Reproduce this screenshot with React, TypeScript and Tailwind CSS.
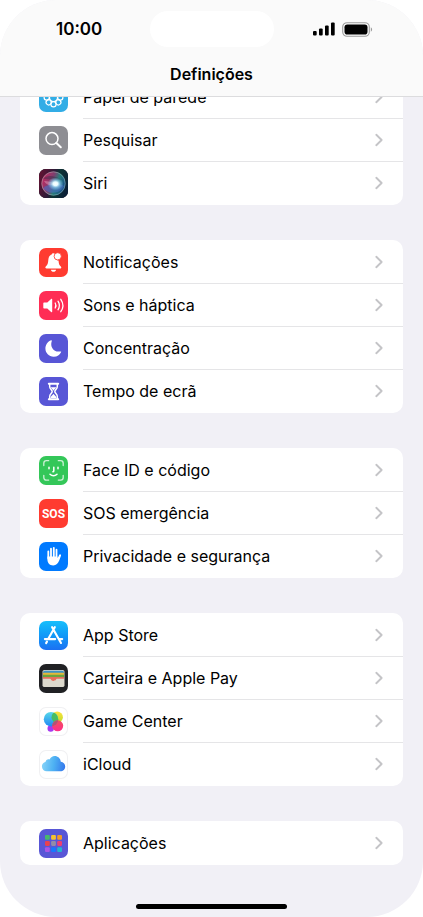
import React from 'react';

interface SettingsItem {
    label: string;
    tile: string;
    icon: React.ReactNode;
}

const WallpaperIcon = () => (
    <svg viewBox="0 0 29 29" className="size-full" fill="none" stroke="#fff" strokeWidth="1.2" aria-hidden="true">
        {[0, 45, 90, 135, 180, 225, 270, 315].map(angle => (
            <circle key={angle} cx="14.5" cy="7.7" r="2.6" transform={`rotate(${angle} 14.5 14.5)`} />
        ))}
        <circle cx="14.5" cy="14.5" r="4" />
    </svg>
);

const SearchIcon = () => (
    <svg viewBox="0 0 29 29" className="size-full" fill="none" stroke="#fff" strokeLinecap="round" aria-hidden="true">
        <circle cx="13" cy="12.6" r="6" strokeWidth="1.5" />
        <path d="M17.4 17l4.4 4.3" strokeWidth="2" />
    </svg>
);

const SiriIcon = () => (
    <svg viewBox="0 0 29 29" className="size-full" aria-hidden="true">
        <defs>
            <linearGradient id="siriBase" x1="0" y1="0.3" x2="1" y2="0.6">
                <stop offset="0" stopColor="#8d1740" />
                <stop offset="0.45" stopColor="#3b2348" />
                <stop offset="0.6" stopColor="#0e4a43" />
                <stop offset="1" stopColor="#0a2b49" />
            </linearGradient>
            <linearGradient id="siriOrb" x1="0" y1="0.3" x2="1" y2="0.7">
                <stop offset="0" stopColor="#d92866" />
                <stop offset="0.4" stopColor="#8b4778" />
                <stop offset="0.62" stopColor="#2c8a86" />
                <stop offset="1" stopColor="#1a4f9c" />
            </linearGradient>
            <radialGradient id="siriGlow">
                <stop offset="0" stopColor="#fff" />
                <stop offset="0.3" stopColor="#e6fbff" />
                <stop offset="0.6" stopColor="#8fcdf0" stopOpacity="0.65" />
                <stop offset="1" stopColor="#8fcdf0" stopOpacity="0" />
            </radialGradient>
        </defs>
        <rect width="29" height="29" fill="#0c0c18" />
        <rect width="29" height="29" fill="url(#siriBase)" opacity="0.65" />
        <circle cx="14.5" cy="14.5" r="12" fill="url(#siriOrb)" opacity="0.85" />
        <path d="M4 10C8 5 16 7 23 11C17 11 10 10 4 10Z" fill="#17283d" opacity="0.35" />
        <path d="M4 19C9 15 18 13 25 17C22 25 9 26 4 19Z" fill="#4a6fc4" opacity="0.6" />
        <path d="M5 12C9 12 13 13 16 14.500C13 17 8 17 5 12Z" fill="#f2a3c4" opacity="0.45" />
        <circle cx="14.5" cy="14.5" r="11.7" fill="none" stroke="#a7ccc4" strokeWidth="0.7" opacity="0.65" />
        <ellipse cx="16.500" cy="14.800" rx="8" ry="6.500" fill="url(#siriGlow)" />
    </svg>
);

const BellIcon = () => (
    <svg viewBox="0 0 29 29" className="size-full" fill="#fff" aria-hidden="true">
        <path d="M14.500 5.200c.6 0 1.100.2 1.500.7a4.200 4.200 0 0 0 3.500 6.500c.3 3.700.9 4.700 2.300 6.200.9 1 .5 1.900-.6 1.900H7.500c-1.200 0-1.600-1-.7-1.900 1.700-1.800 2.300-3 2.500-6.500.2-3.300 1.400-5 3.400-5.600.2-.8.9-1.300 1.800-1.300z" />
        <circle cx="18.700" cy="8.300" r="3.600" stroke="#ff3b30" strokeWidth="0.800" />
        <path d="M11.900 21.700h5.200c-.3 1.300-1.300 2.100-2.600 2.100s-2.300-.8-2.600-2.100z" />
    </svg>
);

const SpeakerIcon = () => (
    <svg viewBox="0 0 29 29" className="size-full" fill="none" stroke="#fff" strokeLinecap="round" aria-hidden="true">
        <path d="M5.300 11.600h3l3.800-3.600c.6-.5 1.100-.3 1.100.4v12.200c0 .7-.5.9-1.100.4l-3.800-3.600h-3c-.6 0-1-.4-1-1v-3.800c0-.6.4-1 1-1z" fill="#fff" stroke="none" />
        <path d="M16.200 12c.9 1.500.9 3.500 0 5M19 10.200c1.700 2.600 1.700 6 0 8.600M21.800 8.300c2.600 3.800 2.600 8.600 0 12.400" strokeWidth="1.300" />
    </svg>
);

const MoonIcon = () => (
    <svg viewBox="0 0 29 29" className="size-full" fill="#fff" aria-hidden="true">
        <path d="M12.100 6.300c.5-.2.9.2.7.7-2.200 6.100 2.200 11.800 8.800 10.400.5-.1.8.3.6.7a8.300 8.300 0 0 1-7.600 4.700c-4.600 0-8.200-3.600-8.200-8.200 0-3.700 2.200-6.900 5.700-8.300z" />
    </svg>
);

const HourglassIcon = () => (
    <svg viewBox="0 0 29 29" className="size-full" aria-hidden="true">
        <path d="M10.700 7v2.800c0 2.100 2.500 3.100 2.500 4.700s-2.500 2.600-2.500 4.700V22M18.300 7v2.800c0 2.100-2.500 3.100-2.500 4.700s2.500 2.600 2.500 4.700V22" fill="none" stroke="#fff" strokeWidth="1.500" />
        <path d="M9.800 6.700h9.400M9.800 22.300h9.400" stroke="#fff" strokeWidth="2" strokeLinecap="round" />
        <path d="M11.700 10.200h5.600c-.4 1.200-2.300 2.100-2.800 3.500-.5-1.400-2.400-2.300-2.800-3.500zM14.500 16.800c.7 1.600 3 2.200 3 4.100h-6c0-1.900 2.300-2.500 3-4.100z" fill="#fff" />
    </svg>
);

const FaceIdIcon = () => (
    <svg viewBox="0 0 29 29" className="size-full" fill="none" stroke="#fff" strokeLinecap="round" strokeLinejoin="round" aria-hidden="true">
        <path d="M4.800 9.500V7.300c0-1.700.9-2.600 2.600-2.600h2.300M19.300 4.700h2.300c1.700 0 2.600.9 2.600 2.600v2.200M24.200 19.300v2.200c0 1.700-.9 2.600-2.600 2.600h-2.300M9.700 24.100H7.400c-1.700 0-2.600-.9-2.600-2.600v-2.200" strokeWidth="1.300" opacity="0.75" />
        <path d="M10 11.200v1.600M19 11.200v1.600M14.800 11.200v3.700c0 .6-.3.9-.9.9" strokeWidth="1.500" />
        <path d="M11 18.200c2 1.900 5 1.900 7 0" strokeWidth="1.500" />
    </svg>
);

const HandIcon = () => (
    <svg viewBox="0 0 29 29" className="size-full" fill="none" stroke="#fff" strokeLinecap="round" aria-hidden="true">
        <path d="M9.300 9.500v7M12 6.700v9M14.800 5.800v9M17.500 7.700v9" strokeWidth="1.800" />
        <path d="M8.400 14.500h10v1.800c.7-.7 1-1.700 1.400-2.600.4-1 1-1.500 1.700-1.300.6.200.7.8.4 1.600l-1.700 4.600c-1.200 3.200-2.900 4.800-6 4.800-3.700 0-5.800-2.300-5.800-6.100z" fill="#fff" stroke="none" />
    </svg>
);

const AppStoreIcon = () => (
    <svg viewBox="0 0 29 29" className="size-full" fill="none" stroke="#fff" strokeWidth="2.100" strokeLinecap="round" aria-hidden="true">
        <path d="M15.800 6.200L9.300 17.700M13.100 6.200l8.900 15.800M5.900 18.100h10.300M20.500 18.100h2.700M8 20.600l-.9 1.500" />
    </svg>
);

const WalletIcon = () => (
    <svg viewBox="0 0 29 29" className="size-full" aria-hidden="true">
        <rect x="3.500" y="6" width="22" height="17" rx="1.800" fill="#d9d6ca" />
        <path d="M4 8.600c0-1.200.7-1.900 1.800-1.900h17.400c1.100 0 1.800.7 1.800 1.900v1H4z" fill="#3c93c5" />
        <path d="M4 8.700h21v2.500H4z" fill="#e6b83a" />
        <path d="M4 10.800h21v2.500H4z" fill="#6ba53f" />
        <path d="M4 12.900h21v4H4z" fill="#e76f5c" />
        <path d="M4 14.800h6.600c.9 0 1.100.3 1.500.9 1 1.600 3.800 1.600 4.800 0 .4-.6.6-.9 1.500-.9H25v6.600c0 .7-.4 1.100-1.100 1.100H5.100c-.7 0-1.100-.4-1.100-1.100z" fill="#dcd9cd" />
    </svg>
);

const GameCenterIcon = () => (
    <svg viewBox="0 0 29 29" className="size-full" aria-hidden="true">
        <defs>
            <linearGradient id="gcBlue" x1="0" y1="0" x2="0" y2="1">
                <stop offset="0" stopColor="#58d9e8" />
                <stop offset="1" stopColor="#2187f5" />
            </linearGradient>
            <linearGradient id="gcYellow" x1="0" y1="0" x2="0" y2="1">
                <stop offset="0" stopColor="#ffe23d" />
                <stop offset="1" stopColor="#b9dc2c" />
            </linearGradient>
            <linearGradient id="gcPink" x1="0" y1="0" x2="0" y2="1">
                <stop offset="0" stopColor="#f2515b" />
                <stop offset="1" stopColor="#ff2c8c" />
            </linearGradient>
            <clipPath id="gcClip">
                <circle cx="12" cy="12.200" r="7.200" />
            </clipPath>
        </defs>
        <circle cx="11.700" cy="21.500" r="3.200" fill="#a63af0" />
        <circle cx="18.200" cy="10.200" r="5.700" fill="url(#gcYellow)" />
        <circle cx="12" cy="12.200" r="7.200" fill="url(#gcBlue)" />
        <circle cx="18.200" cy="10.200" r="5.700" fill="#47bd62" clipPath="url(#gcClip)" />
        <circle cx="18.700" cy="18.800" r="5.500" fill="url(#gcPink)" />
        <circle cx="18.700" cy="18.800" r="5.500" fill="#b25474" clipPath="url(#gcClip)" />
    </svg>
);

const CloudIcon = () => (
    <svg viewBox="0 0 29 29" className="size-full" aria-hidden="true">
        <defs>
            <linearGradient id="cloudFill" x1="0" y1="0.500" x2="1" y2="0.600">
                <stop offset="0" stopColor="#86d3f8" />
                <stop offset="0.500" stopColor="#4eb2f3" />
                <stop offset="1" stopColor="#3579ec" />
            </linearGradient>
        </defs>
        <path d="M7.800 21.300a4.800 4.800 0 0 1-4.900-4.800c0-2.300 1.500-4 3.600-4.400.2-2.100 2-3.200 4.100-2.700C11.600 7.300 13.500 6 15.700 6c3.100 0 5.700 2.300 6.100 5.700 2.500.4 4.400 2.300 4.400 4.800 0 2.700-2.100 4.800-4.800 4.800z" fill="url(#cloudFill)" />
    </svg>
);

const appColors = ['#47b86c', '#f5c22e', '#f39a26', '#e9424f', '#918ca8', '#ee3d72', '#a855e8', '#1677ff', '#22b3d1'];

const AppsIcon = () => (
    <svg viewBox="0 0 29 29" className="size-full" aria-hidden="true">
        {appColors.map((color, i) => (
            <rect key={color} x={6 + (i % 3) * 6.1} y={6 + Math.floor(i / 3) * 6.1} width="4.800" height="4.800" rx="1.100" fill={color} />
        ))}
    </svg>
);

const groups: SettingsItem[][] = [
    [
        { label: 'Papel de parede', tile: 'bg-[#32ade6]', icon: <WallpaperIcon /> },
        { label: 'Pesquisar', tile: 'bg-[#8e8e93]', icon: <SearchIcon /> },
        { label: 'Siri', tile: 'bg-[#15182b]', icon: <SiriIcon /> },
    ],
    [
        { label: 'Notificações', tile: 'bg-[#ff3b30]', icon: <BellIcon /> },
        { label: 'Sons e háptica', tile: 'bg-[#ff2d55]', icon: <SpeakerIcon /> },
        { label: 'Concentração', tile: 'bg-[#5856d6]', icon: <MoonIcon /> },
        { label: 'Tempo de ecrã', tile: 'bg-[#5856d6]', icon: <HourglassIcon /> },
    ],
    [
        { label: 'Face ID e código', tile: 'bg-[#34c759]', icon: <FaceIdIcon /> },
        {
            label: 'SOS emergência',
            tile: 'bg-[#ff3b30]',
            icon: <span className="font-['Liberation_Sans_Narrow','Roboto',sans-serif] text-[12px] font-bold text-white" aria-hidden="true">SOS</span>,
        },
        { label: 'Privacidade e segurança', tile: 'bg-[#007aff]', icon: <HandIcon /> },
    ],
    [
        { label: 'App Store', tile: 'bg-linear-to-b from-[#18bffb] to-[#1c70f2]', icon: <AppStoreIcon /> },
        { label: 'Carteira e Apple Pay', tile: 'bg-[#202124]', icon: <WalletIcon /> },
        { label: 'Game Center', tile: 'bg-white ring-1 ring-inset ring-[#f0f0f2]', icon: <GameCenterIcon /> },
        { label: 'iCloud', tile: 'bg-white ring-1 ring-inset ring-[#f0f0f2]', icon: <CloudIcon /> },
    ],
    [{ label: 'Aplicações', tile: 'bg-[#5856d6]', icon: <AppsIcon /> }],
];

const StatusBar = () => (
    <div className="grid grid-cols-[1fr_124px_1fr] items-center pt-[11px]">
        <span className="pl-14 text-[17px] leading-6 font-semibold">10:00</span>
        <div className="h-9 rounded-full bg-white" />
        <div className="flex items-center justify-end gap-[7px] pr-[50px]">
            <svg viewBox="0 0 22 14" className="h-3.5 w-[22px]" aria-hidden="true">
                <rect x="0" y="9" width="3.700" height="4.500" rx="1.100" />
                <rect x="6" y="6.500" width="3.700" height="7" rx="1.100" />
                <rect x="12" y="3.500" width="3.700" height="10" rx="1.100" />
                <rect x="18" y="0.500" width="3.700" height="13" rx="1.100" />
            </svg>
            <svg viewBox="0 0 31 15" className="h-[15px] w-[31px]" aria-hidden="true">
                <rect x="0.700" y="0.700" width="26.600" height="13.600" rx="4.300" fill="none" stroke="#9b9b9b" strokeWidth="1.100" />
                <rect x="2.500" y="2.500" width="23" height="10" rx="2.800" />
                <path d="M28.800 5.300c1.800.7 1.800 3.700 0 4.400z" fill="#9b9b9b" />
            </svg>
        </div>
    </div>
);

const SettingsRow: React.FC<{ item: SettingsItem }> = ({ item }) => (
    <li className="group">
        <a href="#" className="flex min-h-[43px] items-stretch gap-[15px] pl-[19px]">
            <span className={`flex size-[29px] shrink-0 items-center justify-center self-center overflow-hidden rounded-[7px] ${item.tile}`}>
                {item.icon}
            </span>
            <span className="flex grow items-center justify-between border-b border-[#e5e5e7] pr-5 group-last:border-transparent">
                <span className="text-base">{item.label}</span>
                <svg viewBox="0 0 8 14" className="h-3.5 w-2" fill="none" stroke="#c4c4c7" strokeWidth="1.900" strokeLinecap="round" strokeLinejoin="round" aria-hidden="true">
                    <path d="M1.300 1.800L6.600 7l-5.300 5.200" />
                </svg>
            </span>
        </a>
    </li>
);

const App: React.FC = () => {
    return (
        <div className="bg-white">
            <div className="flex min-h-screen flex-col overflow-hidden rounded-[56px] bg-[#f1f0f6] font-[Inter,sans-serif] text-black">
                <header className="relative z-10 border-b border-[#dcdcde] bg-[#fafafa]">
                    <StatusBar />
                    <h1 className="pt-[15px] pb-2.5 text-center text-base font-semibold">Definições</h1>
                </header>

                {/* The first group is scrolled partly under the header */}
                <main className="-mt-[22px] flex grow flex-col gap-[35px] px-5">
                    {groups.map(group => (
                        <ul key={group[0].label} className="rounded-[10px] bg-white pt-px">
                            {group.map(item => (
                                <SettingsRow key={item.label} item={item} />
                            ))}
                        </ul>
                    ))}
                </main>

                <div className="mx-auto mt-6 mb-2 h-[5px] w-[151px] rounded-full bg-black" />
            </div>
        </div>
    );
};

export default App;
